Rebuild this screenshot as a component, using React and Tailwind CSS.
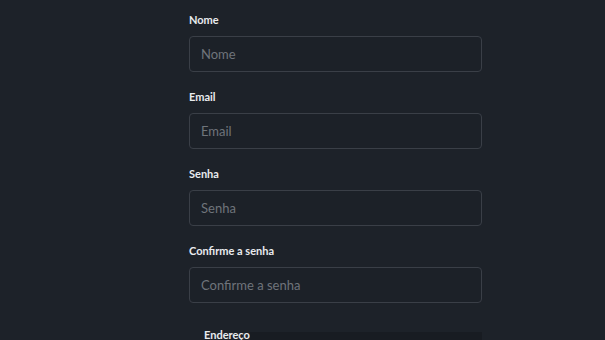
import React from 'react'

const fields = [
  { label: 'Nome', type: 'text' },
  { label: 'Email', type: 'email' },
  { label: 'Senha', type: 'password' },
  { label: 'Confirme a senha', type: 'password' },
]

export default function App() {
  return (
    <div className="w-full h-[340px] overflow-hidden bg-[#1d2229] font-['Lato',sans-serif]">
      <div className="w-[293px] ml-[189px] pt-[13px]">
        {fields.map(f => (
          <div key={f.label} className="mb-[18px]">
            <label className="block text-[11px] font-bold text-[#e9ebee] leading-[14px] mb-[9px]">
              {f.label}
            </label>
            <input
              type={f.type}
              placeholder={f.label}
              className="w-full h-[36px] px-[11px] rounded-[4px] border border-[#3a3f47] bg-[#1c2128] text-[13px] text-gray-200 placeholder:text-[#6f747b] outline-none"
            />
          </div>
        ))}
        <div className="flex items-end mt-[25px]">
          <span className="ml-[15px] text-[11px] font-bold text-[#e9ebee] leading-[14px]">Endereço</span>
          <div className="flex-1 h-[10px] bg-[#181c22]"></div>
        </div>
      </div>
    </div>
  )
}
